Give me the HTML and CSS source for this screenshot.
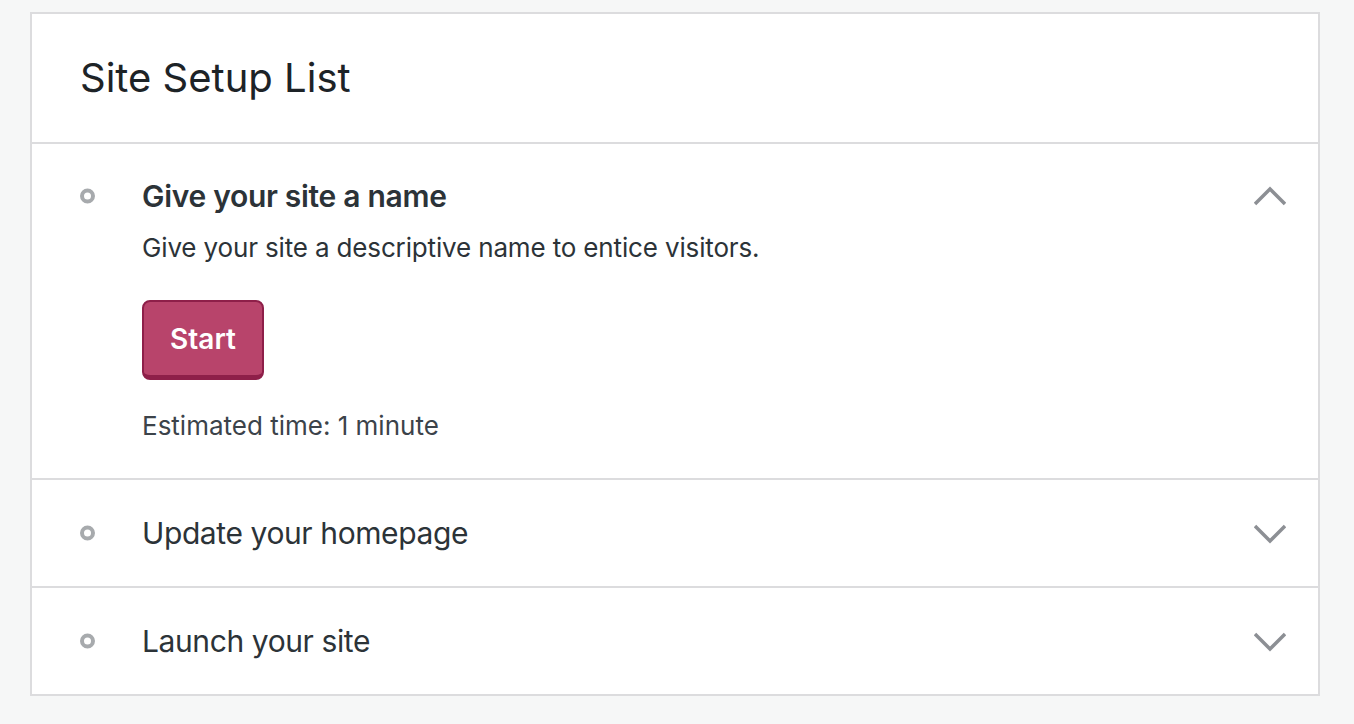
FILE: index.html
```html
<!DOCTYPE html>
<html lang="en">
<head>
<meta charset="utf-8">
<title>Site Setup List</title>
<link rel="stylesheet" href="styles.css">
</head>
<body>
<div class="card">
  <div class="card-header">
    <h1 class="card-title">Site Setup List</h1>
  </div>
  <div class="task task-open">
    <span class="task-icon"><svg width="16" height="16" viewBox="0 0 16 16"><circle cx="7.5" cy="8" r="5.5" fill="none" stroke="#a7aaad" stroke-width="4"/></svg></span>
    <h2 class="task-title task-title-bold">Give your site a name</h2>
    <span class="task-chevron"><svg width="32" height="32" viewBox="0 0 32 32"><path d="M1 24 L16 9 L31 24" fill="none" stroke="#8c8f94" stroke-width="3.5"/></svg></span>
    <div class="task-body">
      <p class="task-desc">Give your site a descriptive name to entice visitors.</p>
      <button class="btn-primary" type="button">Start</button>
      <p class="task-time">Estimated time: 1 minute</p>
    </div>
  </div>
  <div class="task">
    <span class="task-icon"><svg width="16" height="16" viewBox="0 0 16 16"><circle cx="7.5" cy="8" r="5.5" fill="none" stroke="#a7aaad" stroke-width="4"/></svg></span>
    <h2 class="task-title">Update your homepage</h2>
    <span class="task-chevron"><svg width="32" height="32" viewBox="0 0 32 32"><path d="M1 9 L16 24 L31 9" fill="none" stroke="#8c8f94" stroke-width="3.5"/></svg></span>
  </div>
  <div class="task task-last">
    <span class="task-icon"><svg width="16" height="16" viewBox="0 0 16 16"><circle cx="7.5" cy="8" r="5.5" fill="none" stroke="#a7aaad" stroke-width="4"/></svg></span>
    <h2 class="task-title">Launch your site</h2>
    <span class="task-chevron"><svg width="32" height="32" viewBox="0 0 32 32"><path d="M1 9 L16 24 L31 9" fill="none" stroke="#8c8f94" stroke-width="3.5"/></svg></span>
  </div>
</div>
</body>
</html>
```

FILE: styles.css
```css
* { box-sizing: border-box; }
html, body { margin: 0; padding: 0; }
body {
  background: #f6f7f7;
  font-family: Inter, "Noto Sans", sans-serif;
  color: #2c3338;
  padding: 12px 34px 0 30px;
  height: 724px;
}
.card {
  background: #fff;
  border: 2px solid #dcdcde;
}
.card-header {
  height: 130px;
  display: flex;
  align-items: center;
  padding-left: 48px;
  border-bottom: 2px solid #dcdcde;
}
.card-title {
  margin: 0;
  font-size: 40px;
  font-weight: 400;
  line-height: 48px;
  color: #1d2327;
}
.task {
  display: grid;
  grid-template-columns: 62px 1fr 32px;
  align-items: center;
  padding: 33px 32px 33px 48px;
  border-bottom: 2px solid #dcdcde;
}
.task-open { padding-top: 32px; padding-bottom: 32px; }
.task-last { border-bottom: 0; }
.task-icon { display: flex; align-items: center; height: 40px; }
.task-title {
  margin: 0;
  font-size: 30px;
  line-height: 40px;
  font-weight: 400;
  letter-spacing: -0.4px;
  color: #2c3338;
}
.task-title-bold { font-weight: 600; letter-spacing: -0.3px; }
.task-chevron { display: flex; align-items: center; height: 40px; }
.task-body {
  grid-column: 2;
}
.task-desc {
  margin: 12px 0 0;
  font-size: 26px;
  line-height: 40px;
  letter-spacing: -0.15px;
  color: #2c3338;
}
.btn-primary {
  display: block;
  margin-top: 32px;
  width: 122px;
  height: 80px;
  background: #b8446b;
  border: 2px solid #8e1f49;
  border-bottom-width: 5px;
  border-radius: 8px;
  color: #fff;
  font-family: inherit;
  font-size: 28px;
  font-weight: 600;
  padding: 0;
}
.task-time {
  margin: 26px 0 0;
  font-size: 26px;
  line-height: 40px;
  color: #3c434a;
}
```
